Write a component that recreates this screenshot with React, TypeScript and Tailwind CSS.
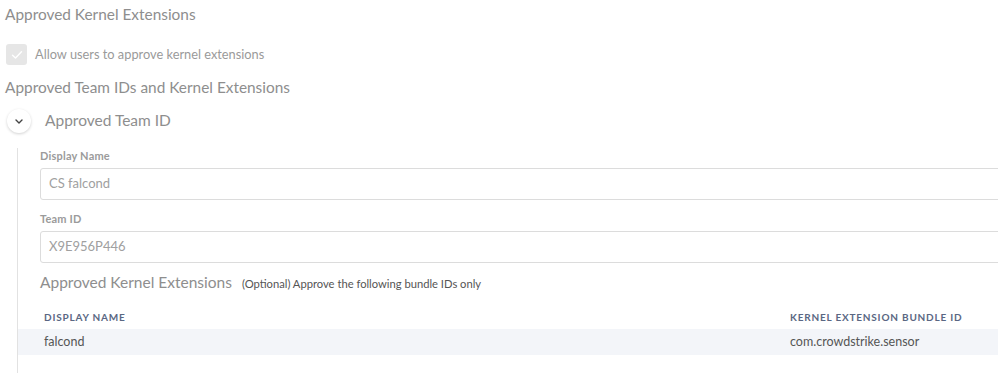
import React from "react";

const Field = ({ label, value, className = "" }: { label: string; value: string; className?: string }) => (
  <div className={className}>
    <div className="h-4 text-[11px] font-bold leading-4 tracking-[0.2px] text-[#9b9b9b]">{label}</div>
    <div className="mt-1 flex h-8 w-[980px] items-center rounded-[3px] border border-[#dcdcdc] px-2 text-[13px] text-[#a0a0a0]">
      {value}
    </div>
  </div>
);

export default function App() {
  return (
    <div className="h-[383px] w-[998px] overflow-hidden bg-white font-['Lato',sans-serif]">
      <div className="pl-[5px]">
        <h2 className="h-7 text-[15.4px] leading-7 text-[#8e8e8e]">Approved Kernel Extensions</h2>

        <label className="mt-4 flex h-[21px] items-center gap-2 pl-px">
          <span className="flex h-[21px] w-[21px] items-center justify-center rounded-[3px] bg-[#e6e6e6]">
            <svg width="12" height="10" viewBox="0 0 12 10" fill="none">
              <path d="M1.5 5.2 4.5 8 10.5 1.8" stroke="white" strokeWidth="1.4" strokeLinecap="round" strokeLinejoin="round" />
            </svg>
          </span>
          <span className="text-[12.8px] text-[#9a9a9a]">Allow users to approve kernel extensions</span>
        </label>

        <h2 className="mt-2 h-7 text-[15.4px] leading-7 text-[#8e8e8e]">Approved Team IDs and Kernel Extensions</h2>

        <div className="mt-2 flex h-6 items-center gap-[14px] pl-[2px]">
          <button className="flex h-6 w-6 items-center justify-center rounded-full bg-white shadow-[0_1px_3px_rgba(0,0,0,0.18)]">
            <svg width="8" height="5" viewBox="0 0 8 5" fill="none">
              <path d="M1 1l3 3 3-3" stroke="#444" strokeWidth="1.4" strokeLinecap="round" strokeLinejoin="round" />
            </svg>
          </button>
          <span className="text-[15.5px] text-[#8e8e8e]">Approved Team ID</span>
        </div>
      </div>

      <div className="ml-[17px] mt-[15px] h-[225px] border-l border-[#e2e2e2] pl-[22px]">
        <Field label="Display Name" value="CS falcond" />
        <Field label="Team ID" value="X9E956P446" className="mt-[11px]" />

        <div className="mt-[7px] flex h-6 items-baseline gap-[10px]">
          <span className="text-[15.5px] leading-6 text-[#8e8e8e]">Approved Kernel Extensions</span>
          <span className="text-[11.2px] text-[#555]">(Optional) Approve the following bundle IDs only</span>
        </div>

        <table className="-ml-[22px] mt-[11px] w-[981px] border-collapse">
          <thead>
            <tr className="h-6 text-left text-[10px] font-bold tracking-[0.8px] text-[#5a6783]">
              <th className="pl-[26px] font-bold">DISPLAY NAME</th>
              <th className="w-[209px] font-bold">KERNEL EXTENSION BUNDLE ID</th>
            </tr>
          </thead>
          <tbody>
            <tr className="h-[26px] bg-[#f3f5f9] text-[12.5px] text-[#555]">
              <td className="pl-[26px]">falcond</td>
              <td>com.crowdstrike.sensor</td>
            </tr>
          </tbody>
        </table>
      </div>
    </div>
  );
}
